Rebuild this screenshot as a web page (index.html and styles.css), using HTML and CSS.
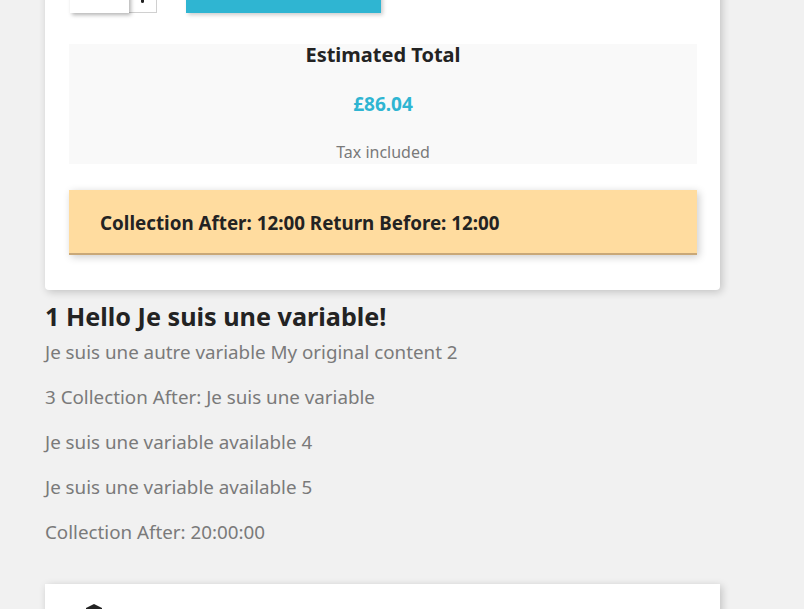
FILE: index.html
```html
<!DOCTYPE html>
<html lang="en">
<head>
<meta charset="utf-8">
<title>Product</title>
<link rel="stylesheet" href="styles.css">
</head>
<body>
<div class="page">
  <section class="card">
    <div class="add-row">
      <div class="qty">
        <div class="qty-input"></div>
        <div class="qty-spin"><span class="chev"></span></div>
      </div>
      <div class="add-btn"></div>
    </div>
    <div class="estimate">
      <div class="est-title">Estimated Total</div>
      <div class="est-price">£86.04</div>
      <div class="est-tax">Tax included</div>
    </div>
    <div class="notice">Collection After: 12:00 Return Before: 12:00</div>
  </section>
  <h2 class="hello">1 Hello Je suis une variable!</h2>
  <p class="line first">Je suis une autre variable My original content 2</p>
  <p class="line">3 Collection After: Je suis une variable</p>
  <p class="line">Je suis une variable available 4</p>
  <p class="line">Je suis une variable available 5</p>
  <p class="line">Collection After: 20:00:00</p>
  <section class="card card2">
    <svg class="icon" width="24" height="24" viewBox="0 0 24 24"><path d="M12 2 L20 6 L20 14 L4 14 L4 6 Z" fill="#222"/></svg>
  </section>
</div>
</body>
</html>
```
FILE: styles.css
```css
html, body {
  margin: 0;
  padding: 0;
  background: #f1f1f1;
  font-family: "Noto Sans", "Open Sans", sans-serif;
  overflow: hidden;
}
.page {
  margin-left: 45px;
  width: 675px;
}
.card {
  background: #fff;
  margin-top: -40px;
  padding: 0 23px 35px 24px;
  border-radius: 0 0 4px 4px;
  box-shadow: 2px 2px 8px 0 rgba(0,0,0,0.2);
}
.add-row {
  height: 53px;
  display: flex;
  align-items: flex-end;
  gap: 29px;
  margin-bottom: 31px;
}
.qty {
  display: flex;
  height: 40px;
}
.qty-input {
  width: 59px;
  height: 40px;
  margin-left: 1px;
  background: #fff;
  box-shadow: 2px 2px 4px 0 rgba(0,0,0,0.3);
  position: relative;
  z-index: 1;
}
.qty-spin {
  width: 28px;
  height: 40px;
  border: 1px solid #d0d0d0;
  border-left: none;
  border-top: none;
  box-sizing: border-box;
  position: relative;
}
.chev {
  position: absolute;
  left: 12px;
  top: 27px;
  width: 3px;
  height: 3px;
  background: #232323;
  border-radius: 0 0 2px 2px;
}
.add-btn {
  width: 195px;
  height: 40px;
  background: #2fb5d2;
  box-shadow: 2px 2px 4px 0 rgba(0,0,0,0.2);
}
.estimate {
  background: #f9f9f9;
  height: 120px;
  text-align: center;
  box-sizing: border-box;
}
.est-title {
  font-size: 20px;
  font-weight: 700;
  color: #232323;
  line-height: 22px;
}
.est-price {
  font-size: 19px;
  font-weight: 700;
  color: #2fb5d2;
  line-height: 26px;
  margin-top: 25px;
}
.est-tax {
  font-size: 16px;
  color: #7a7a7a;
  line-height: 20px;
  margin-top: 25px;
}
.notice {
  margin-top: 26px;
  background: #ffdc9f;
  border-bottom: 2px solid #c9a878;
  height: 63px;
  box-sizing: border-box;
  height: 65px;
  padding-top: 3px;
  display: flex;
  align-items: center;
  padding-left: 31px;
  font-size: 18.8px;
  font-weight: 700;
  color: #232323;
  box-shadow: 2px 2px 8px 0 rgba(0,0,0,0.2);
}
.hello {
  font-size: 25.2px;
  font-weight: 700;
  color: #232323;
  line-height: 30px;
  margin: 11px 0 0 0;
}
.line {
  font-size: 18.8px;
  color: #7a7a7a;
  line-height: 27px;
  margin: 18px 0 0 0;
}
.line.first {
  margin-top: 8px;
}
.card2 {
  margin-top: 38px;
  height: 60px;
  border-radius: 0;
  padding: 18px 0 0 37px;
  box-sizing: border-box;
}
.icon {
  display: block;
}
```
